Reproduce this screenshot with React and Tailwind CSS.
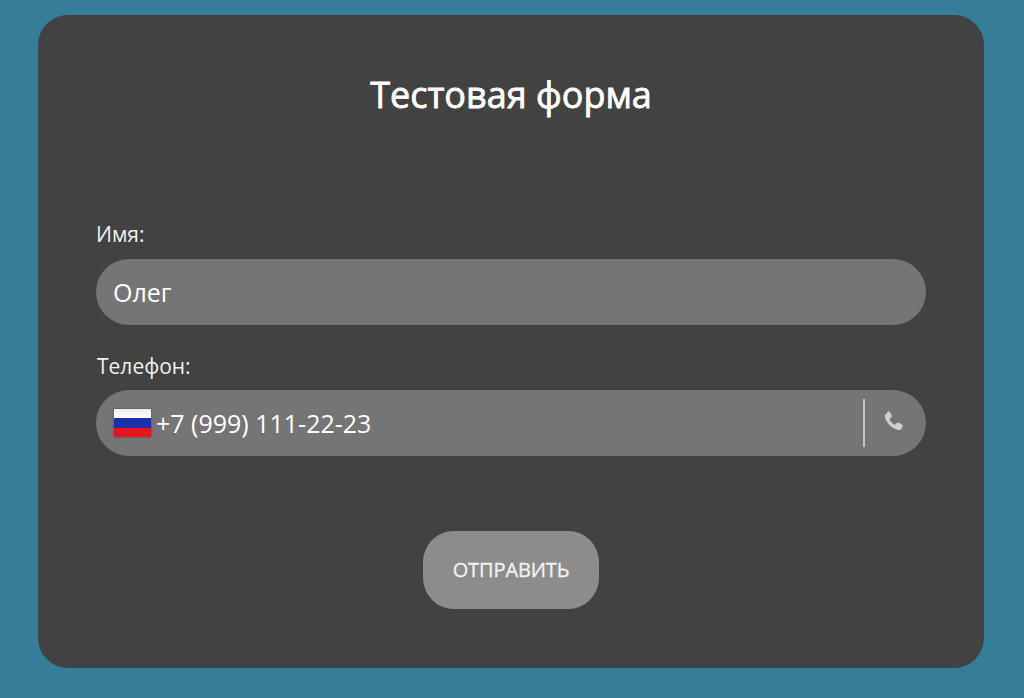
import React from 'react';

function PhoneIcon() {
  return (
    <svg viewBox="0 0 24 24" className="w-[25px] h-[25px]" fill="#cfcfcf">
      <path d="M6.600 2.600c.7-.4 1.500-.2 1.900.5l1.700 3c.4.7.2 1.400-.3 1.900L8.600 9.200c-.3.3-.3.7-.2 1 .9 2 2.500 3.700 4.500 4.700.4.200.8.100 1.100-.2l1.200-1.300c.5-.5 1.300-.7 1.900-.3l3 1.800c.7.400.9 1.300.5 2l-.9 1.800c-.6 1.100-1.800 1.800-3.100 1.500C10.400 18.900 5 13.400 3.700 7.500c-.3-1.300.3-2.500 1.400-3.300z" />
    </svg>
  );
}

function Flag() {
  return (
    <div className="w-[37px] h-[28px] flex flex-col shrink-0 overflow-hidden rounded-[1px] blur-[0.5px] shadow-[0_0_2px_rgba(0,0,0,0.5)]">
      <div className="flex-1 bg-gradient-to-b from-[#ececec] to-white" />
      <div className="flex-1 bg-[#1c30ad]" />
      <div className="flex-1 bg-[#e5141f]" />
    </div>
  );
}

export default function App() {
  return (
    <div className="h-[698px] bg-[#367d99] pt-[15px] px-[38px] font-['Open_Sans','Noto_Sans',sans-serif]">
      <div className="w-[946px] h-[653px] bg-[#424242] rounded-[30px] px-[58px] pt-[55px]">
        <h1 className="text-center text-white text-[36px] leading-[50px] [-webkit-text-stroke:0.8px_white]">
          Тестовая форма
        </h1>

        <form className="mt-[102px]">
          <label className="block text-[#f0f0f0] text-[21px] leading-[26px] -translate-y-px">Имя:</label>
          <input
            type="text"
            defaultValue="Олег"
            className="block w-full h-[66px] mt-[11px] rounded-[33px] bg-[#757575] px-[17px] text-white text-[25px] outline-none"
          />

          <label className="block text-[#f0f0f0] text-[21px] leading-[26px] pl-px mt-[28px]">Телефон:</label>
          <div className="flex items-center h-[66px] mt-[11px] rounded-[33px] bg-[#757575] pl-[18px]">
            <Flag />
            <input
              type="text"
              defaultValue="+7 (999) 111-22-23"
              className="flex-1 min-w-0 ml-[5px] pt-[2px] bg-transparent text-white text-[25px] outline-none"
            />
            <div className="w-[2px] h-[48px] bg-[#c4c4c4]" />
            <div className="w-[61px] flex justify-center -mt-[3px] pr-[5px]">
              <PhoneIcon />
            </div>
          </div>

          <div className="flex justify-center mt-[75px]">
            <button
              type="button"
              className="w-[176px] h-[78px] rounded-[31px] bg-[#8c8c8c] text-[#f2f2f2] text-[20px] tracking-[-0.1px] [-webkit-text-stroke:0.3px_#f2f2f2]"
            >
              ОТПРАВИТЬ
            </button>
          </div>
        </form>
      </div>
    </div>
  );
}
